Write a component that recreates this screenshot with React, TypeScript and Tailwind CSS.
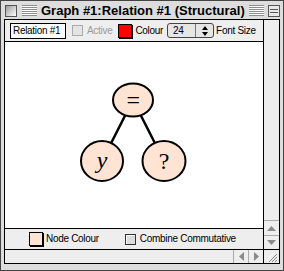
import React from "react";

const Stripes: React.FC<{ className?: string }> = ({ className }) => (
  <div
    className={`h-[11px] bg-[repeating-linear-gradient(to_bottom,#8c8c8c_0px,#8c8c8c_1px,#ffffff_1px,#ffffff_2px)] ${className ?? ""}`}
  />
);

const Swatch: React.FC<{ color: string }> = ({ color }) => (
  <div
    className={`w-[14px] h-[14px] border border-black shadow-[1px_1px_0_#000] ${color}`}
  />
);

const TriUp = () => (
  <svg width="9" height="5" viewBox="0 0 9 5">
    <path d="M4.5 0 L9 5 L0 5 Z" fill="#8a8a8a" />
  </svg>
);
const TriDown = () => (
  <svg width="9" height="5" viewBox="0 0 9 5">
    <path d="M0 0 L9 0 L4.5 5 Z" fill="#8a8a8a" />
  </svg>
);
const TriLeft = () => (
  <svg width="5" height="9" viewBox="0 0 5 9">
    <path d="M5 0 L5 9 L0 4.5 Z" fill="#8a8a8a" />
  </svg>
);
const TriRight = () => (
  <svg width="5" height="9" viewBox="0 0 5 9">
    <path d="M0 0 L5 4.5 L0 9 Z" fill="#8a8a8a" />
  </svg>
);

const Tree = () => (
  <svg width="257" height="185" viewBox="0 0 257 185">
    <g stroke="#000" strokeWidth="2.5" strokeLinecap="round">
      <line x1="128" y1="58" x2="97" y2="119" />
      <line x1="128" y1="58" x2="159" y2="119" />
    </g>
    <g fill="#ffe4d4" stroke="#000" strokeWidth="2">
      <ellipse cx="128" cy="58" rx="20" ry="16.5" />
      <ellipse cx="97" cy="119" rx="21" ry="20" />
      <ellipse cx="159" cy="119" rx="21.5" ry="20" />
    </g>
    <g fontFamily="'Liberation Serif', serif" fontSize="24" textAnchor="middle" fill="#000">
      <text x="128" y="66">=</text>
      <text x="97" y="126" fontStyle="italic">y</text>
      <text x="159" y="127">?</text>
    </g>
  </svg>
);

export default function App() {
  return (
    <div className="w-[284px] h-[271px] bg-[#dddddd] border border-[#444] flex flex-col px-[3px] pb-[6px] font-['Liberation_Sans',Arial,sans-serif] text-[10px] tracking-[-0.3px] text-black leading-none">
      {/* title bar */}
      <div className="h-[18px] flex items-center gap-[4px] pt-px">
        <div className="ml-px w-[12px] h-[12px] border border-[#555] bg-[linear-gradient(135deg,#9a9a9a,#ffffff)]" />
        <Stripes className="w-[15px] ml-[1px]" />
        <div className="text-[13px] font-bold tracking-normal whitespace-nowrap">
          Graph #1:Relation #1 (Structural)
        </div>
        <Stripes className="flex-1" />
        <div className="w-[12px] h-[12px] border border-[#555] bg-[#e8e8e8] flex flex-col justify-center gap-[2px] px-px">
          <div className="h-px bg-[#555]" />
          <div className="h-px bg-[#555]" />
        </div>
      </div>

      {/* content */}
      <div className="flex-1 border border-black flex flex-col bg-[#eeeeee]">
        <div className="flex-1 flex">
          <div className="flex-1 flex flex-col border-r border-black">
            <div className="h-[22px] flex items-center border-b border-black pl-[5px]">
              <div className="w-[56px] h-[16px] border border-black bg-white flex items-center pl-[2px]">
                Relation #1
              </div>
              <div className="ml-[6px] w-[11px] h-[11px] border border-[#aaa] bg-[#e4e4e4]" />
              <span className="ml-[4px] text-[#9a9a9a]">Active</span>
              <div className="ml-[6px]">
                <Swatch color="bg-[#ff0000]" />
              </div>
              <span className="ml-[3px]">Colour</span>
              <div className="ml-[4px] w-[47px] h-[15px] rounded-[3px] border border-[#444] bg-[#e6e6e6] flex items-center">
                <span className="pl-[5px] flex-1">24</span>
                <div className="w-[18px] h-full border-l border-[#777] flex flex-col items-center justify-center gap-[1px]">
                  <svg width="6" height="10" viewBox="0 0 6 10">
                    <path d="M3 0 L6 4 L0 4 Z M0 6 L6 6 L3 10 Z" fill="#000" />
                  </svg>
                </div>
              </div>
              <span className="ml-[2px]">Font Size</span>
            </div>
            <div className="flex-1 bg-white border-b border-black">
              <Tree />
            </div>
            <div className="h-[20px] flex items-center pl-[24px]">
              <Swatch color="bg-[#ffe4d4]" />
              <span className="ml-[3px]">Node Colour</span>
              <div className="ml-[26px] w-[11px] h-[11px] border border-[#333] bg-[#dcdcdc] shadow-[inset_1px_1px_0_#fff]" />
              <span className="ml-[4px]">Combine Commutative</span>
            </div>
          </div>
          {/* vertical scrollbar */}
          <div className="w-[15px] flex flex-col">
            <div className="flex-1" />
            <div className="h-[15px] border-t border-[#aaa] flex items-center justify-center">
              <TriUp />
            </div>
            <div className="h-[14px] border-t border-[#aaa] flex items-center justify-center">
              <TriDown />
            </div>
          </div>
        </div>
        {/* horizontal scrollbar */}
        <div className="h-[14px] flex border-t border-black">
          <div className="flex-1" />
          <div className="w-[15px] border-l border-[#aaa] flex items-center justify-center">
            <TriLeft />
          </div>
          <div className="w-[15px] border-l border-[#aaa] flex items-center justify-center">
            <TriRight />
          </div>
          <div className="w-[16px] border-l border-black flex items-center justify-center">
            <svg width="12" height="12" viewBox="0 0 12 12">
              <g stroke="#8a8a8a" strokeWidth="1">
                <line x1="11" y1="3" x2="3" y2="11" />
                <line x1="11" y1="6" x2="6" y2="11" />
                <line x1="11" y1="9" x2="9" y2="11" />
                <line x1="9" y1="1" x2="1" y2="9" stroke="#fff" />
              </g>
            </svg>
          </div>
        </div>
      </div>
    </div>
  );
}
